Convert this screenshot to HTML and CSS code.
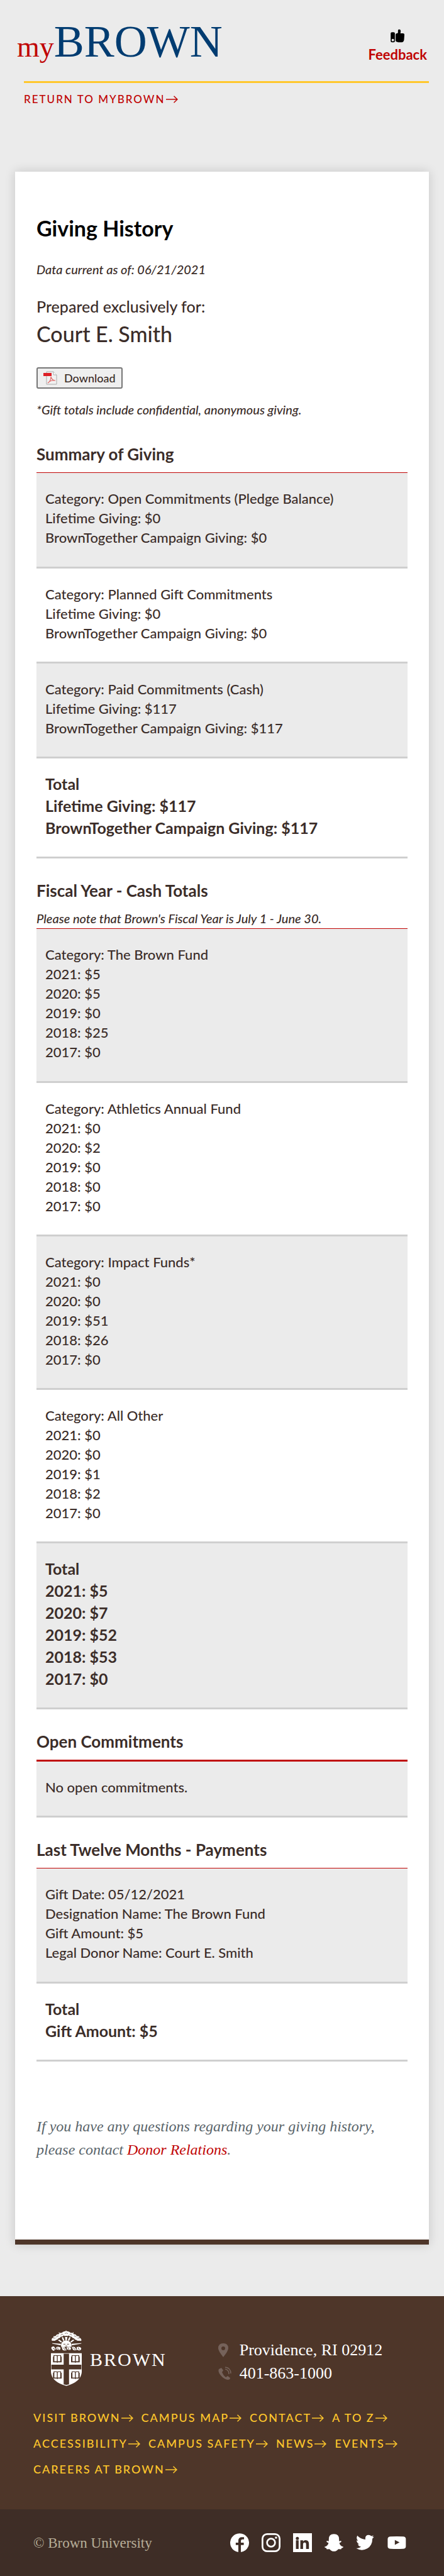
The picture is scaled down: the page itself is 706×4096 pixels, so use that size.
FILE: index.html
```html
<!DOCTYPE html>
<html lang="en">
<head>
<meta charset="utf-8">
<meta name="viewport" content="width=device-width, initial-scale=1">
<title>Giving History | myBrown</title>
<link rel="stylesheet" href="styles.css">
</head>
<body>
<svg class="sprite" aria-hidden="true">
  <symbol id="arrow" viewBox="0 0 19 12"><path d="M0 6h18M12.500.7 18 6l-5.500 5.300" fill="none" stroke="currentColor" stroke-width="1.500"/></symbol>
  <symbol id="book" viewBox="0 0 62 56"><path d="M0 12h4V2q14-4 27 1 13-5 27-1v10h4v40H36l-5 4-5-4H0z"/><path class="page" d="M10 7q9-3 18 1v37H10zM34 8q9-4 18-1v38H34z"/></symbol>
</svg>

<header class="site-header">
  <div class="masthead">
    <a class="brand" href="#"><span class="brand-my">my</span><span class="brand-name">BROWN</span></a>
    <a class="feedback" href="#">
      <svg class="thumb" viewBox="0 0 102 96" aria-hidden="true"><path fill-rule="evenodd" d="M10 21h13q9 0 9 9v56q0 9-9 9H10q-9 0-9-9V30q0-9 9-9zm7 49a9 9 0 1 0 0 18 9 9 0 0 0 0-18z"/><path d="M37 39q0-8 11-9 6-1 7-8V9q0-9 9-8 11 1 11 14 0 6-3 14h20q11 1 10 12l-2 31q-1 20-16 23H57l-14-4q-6-2-6-8z"/></svg>
      <span>Feedback</span>
    </a>
  </div>
  <nav class="return"><a class="arrow-link" href="#">RETURN TO MYBROWN<svg class="arrow" aria-hidden="true"><use href="#arrow"/></svg></a></nav>
</header>

<main class="card">
  <h1>Giving History</h1>
  <p class="note">Data current as of: 06/21/2021</p>
  <p class="prepared">Prepared exclusively for:</p>
  <p class="donor">Court E. Smith</p>
  <button class="download" type="button">
    <svg class="pdf" viewBox="0 0 22 22" aria-hidden="true"><path d="M5 1h11l5 5v15H5z" fill="#f1f1f1" stroke="#aaa"/><path d="M16 1v5h5" fill="#fff" stroke="#aaa"/><path d="M0 3h13v5H0z" fill="#dd1f26"/><path d="M7 19c3-2 5-6 5-10 1 4 3 6 7 6-5-1-9 1-12 4z" fill="none" stroke="#e06a68" stroke-width="1.200"/></svg>
    Download
  </button>
  <p class="note totals-note">*Gift totals include confidential, anonymous giving.</p>

  <section>
    <h2>Summary of Giving</h2>
    <div class="rows">
      <ul class="row"><li>Category: Open Commitments (Pledge Balance)</li><li>Lifetime Giving: $0</li><li>BrownTogether Campaign Giving: $0</li></ul>
      <ul class="row"><li>Category: Planned Gift Commitments</li><li>Lifetime Giving: $0</li><li>BrownTogether Campaign Giving: $0</li></ul>
      <ul class="row"><li>Category: Paid Commitments (Cash)</li><li>Lifetime Giving: $117</li><li>BrownTogether Campaign Giving: $117</li></ul>
      <ul class="row total"><li>Total</li><li>Lifetime Giving: $117</li><li>BrownTogether Campaign Giving: $117</li></ul>
    </div>
  </section>

  <section>
    <h2>Fiscal Year - Cash Totals</h2>
    <p class="note fiscal-note">Please note that Brown's Fiscal Year is July 1 - June 30.</p>
    <div class="rows">
      <ul class="row"><li>Category: The Brown Fund</li><li>2021: $5</li><li>2020: $5</li><li>2019: $0</li><li>2018: $25</li><li>2017: $0</li></ul>
      <ul class="row"><li>Category: Athletics Annual Fund</li><li>2021: $0</li><li>2020: $2</li><li>2019: $0</li><li>2018: $0</li><li>2017: $0</li></ul>
      <ul class="row"><li>Category: Impact Funds*</li><li>2021: $0</li><li>2020: $0</li><li>2019: $51</li><li>2018: $26</li><li>2017: $0</li></ul>
      <ul class="row"><li>Category: All Other</li><li>2021: $0</li><li>2020: $0</li><li>2019: $1</li><li>2018: $2</li><li>2017: $0</li></ul>
      <ul class="row total"><li>Total</li><li>2021: $5</li><li>2020: $7</li><li>2019: $52</li><li>2018: $53</li><li>2017: $0</li></ul>
    </div>
  </section>

  <section>
    <h2>Open Commitments</h2>
    <div class="rows rows-heavy">
      <ul class="row"><li>No open commitments.</li></ul>
    </div>
  </section>

  <section>
    <h2>Last Twelve Months - Payments</h2>
    <div class="rows">
      <ul class="row"><li>Gift Date: 05/12/2021</li><li>Designation Name: The Brown Fund</li><li>Gift Amount: $5</li><li>Legal Donor Name: Court E. Smith</li></ul>
      <ul class="row total"><li>Total</li><li>Gift Amount: $5</li></ul>
    </div>
  </section>

  <p class="questions">If you have any questions regarding your giving history, please contact <a href="#">Donor Relations</a>.</p>
</main>

<footer class="site-footer">
  <div class="footer-main">
    <div class="footer-top">
      <a class="crest-link" href="#">
        <svg class="crest" viewBox="0 0 218 395" aria-hidden="true">
          <g fill="#fff">
            <path d="M6 73q-4-16 12-20 2-12 16-12 5-14 20-12 8-13 23-10 10-13 31-12 21-1 31 12 16-3 24 10 15-2 19 12 15 0 17 12 16 3 17 20-8 5-16 1-12 4-20-4-12-2-16-12-12-1-18-12-14 1-20-9-9 8-18 3-9 5-18-3-6 10-20 9-6 11-18 12-4 10-16 12-8 8-20 4-7 3-10-1z"/>
            <path d="M107 0l3 8h-6zM56 13l7 8-6 3zM160 13l-7 8 6 3zM18 40l6 8-6 2zM200 40l-6 8 6 2z"/>
            <path d="M72 117q-3-21 9-34 11-11 27-11 17 0 28 12 12 13 9 33l-18 2H90z"/>
            <path d="M103 72l-4-23h18l-5 23zM86 76L76 51l10-1 9 21zM129 76l10-25-10-1-9 21zM72 87L50 72l8-6 20 15zM143 87l22-15-8-6-20 15zM70 96L9 92v3l61 12zM147 96l68-4v3l-68 12z"/>
            <path d="M2 124q5-10 20-8l14 19q-10 2-15 11-14-2-19-22zM38 120q14-6 30 4l-4 16q-16 1-26-6zM76 118q13-4 21 4l14 20q-20 6-29-4zM112 122q17-6 31 3l-5 15q-17 2-26-7zM148 119q13-5 22 2l12 20q-18 6-27-4zM182 121q18-8 32 5 2 13-11 18-13-1-21-8z"/>
            <path d="M0 163h218v133q-5 69-109 98Q4 365 0 296z"/>
          </g>
          <path d="M3 244h87v-78h38v78h87v34h-87v105l-19 5-19-5V278H3z" fill="#4e3629"/>
          <g fill="#4e3629"><use href="#book" x="14" y="175" width="62" height="56"/><use href="#book" x="142" y="175" width="62" height="56"/><use href="#book" x="14" y="290" width="62" height="56"/><use href="#book" x="142" y="290" width="62" height="56"/></g>
          <path d="M88 99h15M113 99h15M102 112h13" stroke="#4e3629" stroke-width="4"/>
          <path d="M14 130q12-2 18 12M48 123q-3 8 9 17M87 123l17 20M122 123q-3 8 9 17M158 123l17 20M194 123q-3 8 9 17" fill="none" stroke="#4e3629" stroke-width="4"/>
          <path d="M17 60q6-7 15-3M38 50q5-12 16-9M68 36q7-10 18-6M98 24q10-8 22 0M132 30q11-4 18 6M163 41q12-3 17 9M187 57q9-4 15 3" fill="none" stroke="#4e3629" stroke-width="3"/>
        </svg>
        <span class="crest-name">BROWN</span>
      </a>
      <address class="contact">
        <span class="contact-line"><svg class="pin" viewBox="0 0 16 22" aria-hidden="true"><path fill-rule="evenodd" d="M8 0q8 0 8 8 0 4-8 14Q0 12 0 8q0-8 8-8zm0 5a3 3 0 1 0 0 6 3 3 0 0 0 0-6z"/></svg>Providence, RI 02912</span>
        <span class="contact-line"><svg class="phone" viewBox="0 0 21 21" aria-hidden="true"><path d="M5 2l3 4-2 3q2 5 6 8l3-2 4 3q0 3-4 3Q9 20 4 14T1 4z"/><path d="M11 4q6 1 6 8M11 1q9 1 9 10" fill="none" stroke="currentColor" stroke-width="1.500"/></svg>401-863-1000</span>
      </address>
    </div>
    <nav class="footer-links">
      <a class="arrow-link" href="#">VISIT BROWN<svg class="arrow" aria-hidden="true"><use href="#arrow"/></svg></a>
      <a class="arrow-link" href="#">CAMPUS MAP<svg class="arrow" aria-hidden="true"><use href="#arrow"/></svg></a>
      <a class="arrow-link" href="#">CONTACT<svg class="arrow" aria-hidden="true"><use href="#arrow"/></svg></a>
      <a class="arrow-link" href="#">A TO Z<svg class="arrow" aria-hidden="true"><use href="#arrow"/></svg></a>
      <a class="arrow-link" href="#">ACCESSIBILITY<svg class="arrow" aria-hidden="true"><use href="#arrow"/></svg></a>
      <a class="arrow-link" href="#">CAMPUS SAFETY<svg class="arrow" aria-hidden="true"><use href="#arrow"/></svg></a>
      <a class="arrow-link" href="#">NEWS<svg class="arrow" aria-hidden="true"><use href="#arrow"/></svg></a>
      <a class="arrow-link" href="#">EVENTS<svg class="arrow" aria-hidden="true"><use href="#arrow"/></svg></a>
      <a class="arrow-link" href="#">CAREERS AT BROWN<svg class="arrow" aria-hidden="true"><use href="#arrow"/></svg></a>
    </nav>
  </div>
  <div class="footer-bottom">
    <small class="copyright">© Brown University</small>
    <nav class="social" aria-label="Social media">
      <a href="#" aria-label="Facebook"><svg viewBox="0 0 132 132"><path d="M57 132V83H39V66h18V53q0-26 26-26h14v16H86q-11 0-11 11v12h20v17H75v49a66 66 0 1 0-18 0z"/></svg></a>
      <a href="#" aria-label="Instagram"><svg viewBox="0 0 132 132"><rect x="6" y="6" width="120" height="120" rx="32" fill="none" stroke="#fff" stroke-width="12"/><circle cx="66" cy="66" r="28" fill="none" stroke="#fff" stroke-width="12"/><circle cx="101" cy="31" r="8"/></svg></a>
      <a href="#" aria-label="LinkedIn"><svg viewBox="0 0 132 132"><path fill-rule="evenodd" d="M0 0h132v132H0zM20 50v60h19V50zM30 25a11 11 0 1 0 0 22 11 11 0 0 0 0-22zM51 50v60h19V78q0-13 11-13 10 0 10 13v32h20V75q0-27-23-27-12 0-18 9v-7z"/></svg></a>
      <a href="#" aria-label="Snapchat"><svg viewBox="0 0 132 132"><path d="M66 6q36 0 36 36v13q5 1 10-2 6 0 6 5-2 7-14 9 4 22 27 28 3 5-12 9l-3 8-19-1q-13 16-31 16t-31-16l-19 1-3-8Q-3 100 1 95q23-6 27-28-12-2-14-9 0-5 6-5 5 3 10 2V42Q30 6 66 6z"/></svg></a>
      <a href="#" aria-label="Twitter"><svg viewBox="0 0 132 132"><path d="M10 17q20 25 56 27-4-32 23-32 11 0 18 8 8-1 15-6-2 8-9 13 7 0 13-3-4 8-11 13 0 48-36 70-39 22-79-2 21 2 36-10-18-3-23-18h11Q6 70 4 50q5 3 11 3Q-2 38 10 17z"/></svg></a>
      <a href="#" aria-label="YouTube"><svg viewBox="0 0 132 132"><path fill-rule="evenodd" d="M22 23q44-3 88 0 18 1 19 16v54q-1 15-19 16-44 3-88 0-19-1-20-16V39q1-15 20-16zM52 47v34l33-17z"/></svg></a>
    </nav>
  </div>
</footer>
</body>
</html>
```
FILE: styles.css
```css
* { box-sizing: border-box; }

body {
  margin: 0;
  background: #ebebeb;
  color: #3b2d29;
  font-family: Lato, "Liberation Sans", sans-serif;
  font-size: 22px;
  font-weight: 500;
  line-height: 31px;
}

h1, h2, p, ul { margin: 0; padding: 0; }
ul { list-style: none; }
a { color: #c00404; text-decoration: none; }
.sprite { display: none; }

/* Header */
.site-header { padding: 24px 24px 0 27px; }
.masthead {
  display: flex;
  justify-content: space-between;
  height: 105px;
}
.brand {
  font-family: "Liberation Serif", serif;
  line-height: 84px;
  white-space: nowrap;
}
.brand-my { font-size: 46px; }
.brand-name { font-size: 72px; color: #003c71; }
.feedback {
  display: flex;
  flex-direction: column;
  align-items: center;
  gap: 3px;
  padding: 22px 3px 0 0;
  font-weight: 700;
}
.thumb { width: 22px; height: 22px; fill: #000; }
.return {
  display: flex;
  margin-left: 11px;
  padding-top: 15px;
  border-top: 3px solid #ffc72c;
}
.arrow-link {
  display: inline-flex;
  align-items: center;
  gap: 1px;
  font-size: 17px;
  line-height: 21px;
  letter-spacing: 2px;
  white-space: nowrap;
}
.arrow { width: 19px; height: 12px; }

/* Card */
.card {
  margin: 105px 24px 82px;
  padding: 70px 34px 124px;
  background: #fff;
  border-bottom: 8px solid #4e3629;
  box-shadow: 0 0 16px rgba(0, 0, 0, 0.16);
}
h1 {
  color: #000;
  font-size: 34px;
  line-height: 40px;
}
.note {
  font-size: 20px;
  font-style: italic;
  line-height: 27px;
}
h1 + .note { margin-top: 32px; }
.prepared { margin-top: 28px; font-size: 25px; line-height: 35px; }
.donor { margin-top: 8px; font-size: 34px; line-height: 36px; }
.download {
  display: flex;
  align-items: center;
  gap: 11px;
  height: 34px;
  margin-top: 35px;
  padding: 0 9px;
  background: #efefef;
  border: 2px solid #767676;
  border-radius: 3px;
  color: inherit;
  font: inherit;
  font-size: 18px;
}
.pdf { width: 22px; height: 22px; }
.totals-note { margin-top: 20px; }

h2 {
  margin: 35px 0 13px;
  font-size: 26px;
  line-height: 32px;
}
.totals-note + section h2 { margin-top: 41px; }
.fiscal-note { margin: 15px 0 2px; }
.rows { border-top: 1px solid #c00404; }
.rows-heavy { border-top-width: 3px; }
.row {
  padding: 25px 14px 30px;
  border-bottom: 3px solid #cfcfcf;
}
.row:nth-child(odd) { background: #ebebeb; }
.rows:not(.rows-heavy) .row:first-child { padding-bottom: 31px; }
.total {
  padding: 23px 14px 28px;
  font-size: 25px;
  font-weight: 700;
  line-height: 35px;
}
.questions {
  margin-top: 85px;
  color: #59646a;
  font-family: "Liberation Serif", serif;
  font-size: 24px;
  font-style: italic;
  line-height: 37px;
}

/* Footer */
.site-footer { color: #fff; font-family: "Liberation Serif", serif; }
.footer-main {
  padding: 54px 53px 53px;
  background: #4e3629;
}
.footer-top {
  display: flex;
  gap: 82px;
  padding-left: 28px;
}
.crest-link { display: flex; gap: 13px; color: #fff; }
.crest { width: 49px; height: 89px; }
.page { fill: #fff; }
.crest-name {
  padding-top: 30px;
  font-size: 30px;
  line-height: 34px;
  letter-spacing: 2px;
}
.contact {
  padding-top: 13px;
  font-size: 26px;
  font-style: normal;
  line-height: 37px;
}
.contact-line {
  display: grid;
  grid-template-columns: 21px auto;
  align-items: center;
  gap: 13px;
  white-space: nowrap;
}
.contact-line svg { color: #75625a; fill: currentColor; }
.pin { width: 16px; height: 22px; }
.phone { width: 21px; height: 21px; }
.footer-links {
  display: flex;
  flex-wrap: wrap;
  gap: 20px 13px;
  margin-top: 40px;
  font-family: Lato, "Liberation Sans", sans-serif;
}
.footer-links a { color: #ffc72c; font-size: 18px; font-weight: 500; }
.footer-bottom {
  display: flex;
  align-items: center;
  justify-content: space-between;
  min-height: 106px;
  padding: 0 60px 0 53px;
  background: #3e2d26;
}
.copyright { color: #b7ad98; font-size: 23px; }
.social { display: flex; gap: 20px; }
.social a { display: block; height: 30px; }
.social svg { display: block; width: 30px; height: 30px; fill: #fff; }
```
